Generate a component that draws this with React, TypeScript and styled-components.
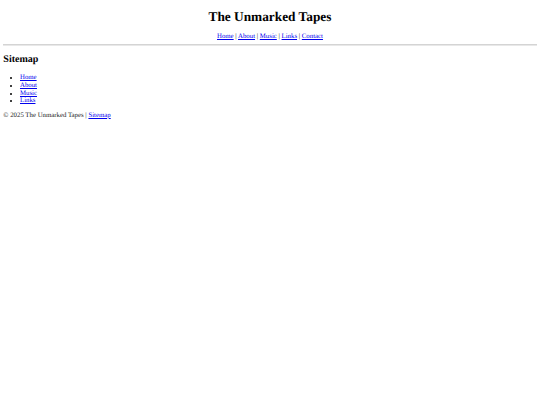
import React from 'react'
import styled, { createGlobalStyle } from 'styled-components'

const GlobalStyle = createGlobalStyle`
  html, body {
    background: #fff;
  }
  body {
    margin: 0 3.33px 3.33px;
    font-family: 'Liberation Serif', 'Times New Roman', serif;
    font-size: 6.8px;
    line-height: 7.67px;
    color: #000;
    text-rendering: geometricPrecision;
  }
`

const Header = styled.header`
  text-align: center;
`

const Title = styled.h1`
  font-size: 13.33px;
  line-height: 15.33px;
  font-weight: bold;
  margin: 8.9px 0;
`

const Nav = styled.nav`
  font-size: 6.8px;
`

const Link = styled.a`
  color: #0000ee;
  text-decoration: underline;
`

const Rule = styled.hr`
  margin: 3.33px 0;
  border: 0;
  height: 0;
  border-top: 1px solid #d4d4d4;
  border-bottom: 1px solid #e8e8e8;
`

const Heading = styled.h2`
  font-size: 10px;
  line-height: 11.5px;
  font-weight: bold;
  margin: 8.3px 0;
`

const List = styled.ul`
  margin: 6.67px 0;
  padding-left: 16.67px;
  list-style: disc;
`

const Footer = styled.footer`
  margin: 6.67px 0;
  color: #222;
`

const navLinks = ['Home', 'About', 'Music', 'Links', 'Contact']
const sitemap = ['Home', 'About', 'Music', 'Links']

export default function App() {
  return (
    <>
      <GlobalStyle />
      <Header>
        <Title>The Unmarked Tapes</Title>
        <Nav>
          {navLinks.map((label, i) => (
            <React.Fragment key={label}>
              {i > 0 && ' | '}
              <Link href="#">{label}</Link>
            </React.Fragment>
          ))}
        </Nav>
      </Header>
      <Rule />
      <main>
        <Heading>Sitemap</Heading>
        <List>
          {sitemap.map((label) => (
            <li key={label}>
              <Link href="#">{label}</Link>
            </li>
          ))}
        </List>
      </main>
      <Footer>
        {'\u00A9'} 2025 The Unmarked Tapes | <Link href="#">Sitemap</Link>
      </Footer>
    </>
  )
}
